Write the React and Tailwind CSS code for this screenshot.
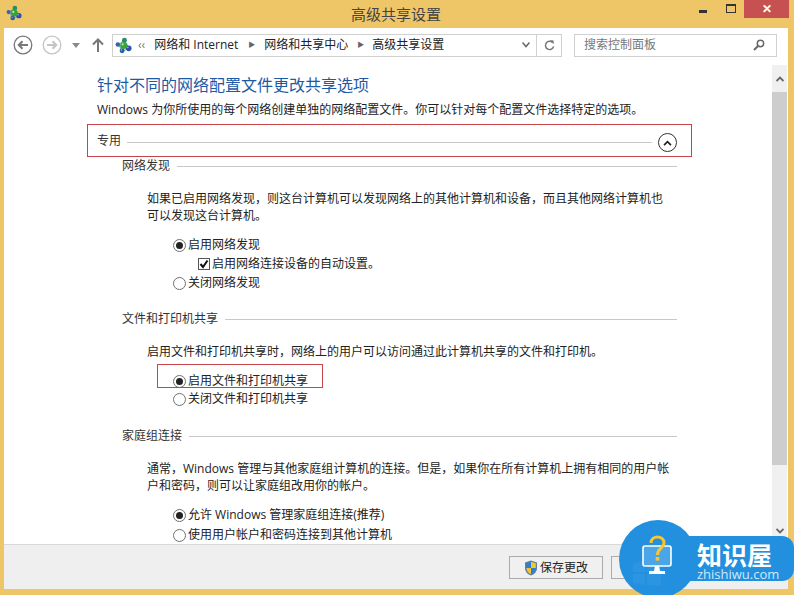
const fontStack = "font-['Open_Sans','Noto_Sans_CJK_SC',sans-serif]";

function NetworkIcon({ className }) {
    return (
        <svg viewBox="0 0 18 18" className={className}>
            <path d="M3.5 8 L10 3.5 L15 12 L8 15 Z" stroke="#7a93ad" strokeWidth="1" fill="none" />
            <circle cx="10" cy="3.5" r="2.6" fill="#2a8a6a" />
            <circle cx="3" cy="8" r="2.4" fill="#3a62b0" />
            <circle cx="14.5" cy="12" r="3" fill="#2a4fb0" />
            <circle cx="7.5" cy="14.5" r="2.6" fill="#2b5ca8" />
            <circle cx="9.2" cy="9" r="3.8" fill="#35a53a" />
            <circle cx="8.2" cy="7.8" r="1.2" fill="#b9e8b0" />
            <circle cx="13.6" cy="11" r="0.8" fill="#9fc0f0" />
            <circle cx="6.8" cy="13.8" r="0.7" fill="#9fc0f0" />
        </svg>
    );
}

function Radio({ checked }) {
    return (
        <span className="w-[13px] h-[13px] rounded-full border border-[#6f6f6f] bg-white flex items-center justify-center shrink-0">
            {checked && <span className="w-[7px] h-[7px] rounded-full bg-[#222]"></span>}
        </span>
    );
}

function RadioRow({ checked, children, className = "" }) {
    return (
        <div className={`flex items-center gap-[2px] h-[18px] pl-[169px] text-xs text-[#222] ${className}`}>
            <Radio checked={checked} />
            <span>{children}</span>
        </div>
    );
}

function SectionTitle({ children, className = "" }) {
    return (
        <div className={`flex items-center gap-[7px] h-[18px] pl-[118px] pr-[95px] text-xs text-[#333] ${className}`}>
            <span className="shrink-0">{children}</span>
            <span className="h-px flex-1 bg-[#c8c8c8]"></span>
        </div>
    );
}

function Para({ children, className = "" }) {
    return <p className={`pl-[143px] pr-[98px] text-xs leading-[17px] text-[#222] ${className}`}>{children}</p>;
}

function Shield() {
    return (
        <svg viewBox="0 0 14 16" className="w-[14px] h-[16px]">
            <path d="M7 0.5 L13 2.5 V8 C13 12 10 14.5 7 15.5 C4 14.5 1 12 1 8 V2.5 Z" fill="#5f7f9f" />
            <path d="M7 1.8 V8 H2.2 V3.3 Z" fill="#2f7fd0" />
            <path d="M7 1.8 L11.8 3.3 V8 H7 Z" fill="#f2c62f" />
            <path d="M7 8 V14.2 C4.5 13.3 2.6 11 2.3 8 Z" fill="#f2c62f" />
            <path d="M7 8 H11.7 C11.4 11 9.5 13.3 7 14.2 Z" fill="#2f7fd0" />
        </svg>
    );
}

function NavBar() {
    return (
        <div className="flex items-center h-[37px] pb-[3px] shrink-0">
            <svg viewBox="0 0 20 20" className="w-5 h-5 ml-[9px]">
                <circle cx="10" cy="10" r="8.8" fill="none" stroke="#777" strokeWidth="1.3" />
                <path d="M15 10 H6 M9.5 6.2 L5.7 10 L9.5 13.8" fill="none" stroke="#777" strokeWidth="2" />
            </svg>
            <svg viewBox="0 0 20 20" className="w-5 h-5 ml-[9px]">
                <circle cx="10" cy="10" r="8.8" fill="none" stroke="#c4c4c4" strokeWidth="1.3" />
                <path d="M5 10 H14 M10.5 6.2 L14.3 10 L10.5 13.8" fill="none" stroke="#c4c4c4" strokeWidth="2" />
            </svg>
            <svg viewBox="0 0 8 5" className="w-2 h-[5px] ml-[10px]">
                <path d="M0 0 H8 L4 5 Z" fill="#8a8a8a" />
            </svg>
            <svg viewBox="0 0 12 14" className="w-3 h-[14px] ml-[12px]">
                <path d="M6 14 V2 M1 6.5 L6 1.5 L11 6.5" fill="none" stroke="#777" strokeWidth="2" />
            </svg>
            <div className="flex items-center w-[450px] h-[23px] ml-[8px] border border-[#d0d0d0] text-xs text-[#222]">
                <NetworkIcon className="w-[17px] h-[17px] ml-[2px]" />
                <span className="ml-[6px] text-[#777]">‹‹</span>
                <span className="ml-[9px]">网络和 Internet</span>
                <span className="ml-[10px] mr-[9px] text-[7px] text-[#666]">▶</span>
                <span>网络和共享中心</span>
                <span className="ml-[9px] mr-[8px] text-[7px] text-[#666]">▶</span>
                <span>高级共享设置</span>
                <svg viewBox="0 0 8 6" className="w-2 h-[6px] ml-auto mr-[6px]">
                    <path d="M0.5 0.5 L4 4.5 L7.5 0.5" fill="none" stroke="#666" strokeWidth="1.5" />
                </svg>
                <div className="flex items-center justify-center w-[25px] h-full border-l border-[#d0d0d0]">
                    <svg viewBox="0 0 12 12" className="w-[11px] h-[11px]">
                        <path d="M9.5 3 A4.5 4.5 0 1 0 10.5 7" fill="none" stroke="#777" strokeWidth="1.6" />
                        <path d="M6.5 0 L10.5 0.5 V4.5 Z" fill="#777" />
                    </svg>
                </div>
            </div>
            <div className="flex items-center justify-between w-[203px] h-[23px] ml-[12px] pl-[9px] pr-[11px] border border-[#d0d0d0] text-xs text-[#777]">
                <span>搜索控制面板</span>
                <svg viewBox="0 0 12 12" className="w-3 h-3">
                    <circle cx="7.5" cy="4.5" r="3.2" fill="none" stroke="#666" strokeWidth="1.5" />
                    <path d="M5 7 L1 11" stroke="#666" strokeWidth="2" />
                </svg>
            </div>
        </div>
    );
}

function Logo() {
    return (
        <div className="absolute left-[619px] top-[520px] w-[175px] h-[75px]">
            <div className="absolute left-[50px] top-[16px] w-[125px] h-[45px] rounded-r-[12px] bg-[#2290de]"></div>
            <div className="absolute left-0 top-0 w-[78px] h-[78px] rounded-full bg-[#2290de]"></div>
            {/* faint windows mark under the badge */}
            <svg viewBox="0 0 28 26" className="absolute left-[14px] top-[40px] w-[28px] h-[26px]">
                <path d="M0 3 L12 1 V12 H0 Z M14 1 L28 0 V12 H14 Z M0 14 H12 V25 L0 23 Z M14 14 H28 V26 L14 25 Z" fill="#2b95e1" />
            </svg>
            <svg viewBox="0 0 30 40" className="absolute left-[23px] top-[15px] w-[30px] h-[40px]">
                <rect x="1" y="11" width="28" height="20" rx="2" fill="#4aa6e8" stroke="#ffffff" strokeWidth="1.6" />
                <path d="M13 31 H17 L18 36 H23 V39 H7 V36 H12 Z" fill="#ffffff" />
                <path d="M9 8 C9 0 22 0 22 8 C22 13 15.5 13 15.5 20" fill="none" stroke="#f7c531" strokeWidth="3" />
                <rect x="13.7" y="22" width="3.6" height="3.6" fill="#f7c531" />
            </svg>
            <div className="absolute left-[78px] top-[20px] text-[25px] leading-[30px] font-bold text-white whitespace-nowrap">知识屋</div>
            <div className="absolute left-[78px] top-[48px] text-[13px] leading-[12px] text-[#cfe8fa] whitespace-nowrap font-['Open_Sans',sans-serif]">zhishiwu.com</div>
        </div>
    );
}

export default function App() {
    return (
        <div className={`relative w-[794px] h-[595px] overflow-hidden flex flex-col bg-[#efc667] ${fontStack}`}>
            {/* title bar */}
            <div className="relative flex items-center h-[28px] shrink-0">
                <NetworkIcon className="w-4 h-4 ml-[6px] -mt-[3px]" />
                <div className="flex-1 text-center text-[15px] text-[#444] pl-[71px]">高级共享设置</div>
                <div className="flex self-start">
                    <div className="w-[8px] h-[3px] mt-[10px] bg-[#333] mr-[19px]"></div>
                    <div className="w-[10px] h-[9px] mt-[4px] border border-[#333] border-t-2 mr-[8px]"></div>
                    <div className="flex items-center justify-center w-[45px] h-[18px] bg-[#c75050] text-white text-xs font-bold mr-[5px]">✕</div>
                </div>
            </div>

            <div className="flex flex-col flex-1 mx-[4px] mr-[6px] mb-[6px] bg-white min-h-0">
                <NavBar />
                <div className="flex flex-1 min-h-0">
                    <div className="flex-1 pt-[10px]">
                        <h1 className="pl-[93px] text-base leading-[20px] text-[#1d5aa5]">针对不同的网络配置文件更改共享选项</h1>
                        <p className="pl-[93px] mt-[6px] text-xs leading-[18px] text-[#222]">Windows 为你所使用的每个网络创建单独的网络配置文件。你可以针对每个配置文件选择特定的选项。</p>
                        <div className="flex items-center gap-[6px] h-[33px] mt-[6px] pl-[93px] pr-[95px] text-xs text-[#333]">
                            <span className="-mt-[2px]">专用</span>
                            <span className="h-px flex-1 mt-[2px] bg-[#c8c8c8]"></span>
                            <span className="flex items-center justify-center w-[19px] h-[19px] rounded-full border border-[#333] mt-[2px]">
                                <svg viewBox="0 0 10 7" className="w-[9px] h-[6px]">
                                    <path d="M1 6 L5 2 L9 6" fill="none" stroke="#222" strokeWidth="2" />
                                </svg>
                            </span>
                        </div>
                        <SectionTitle className="-mt-[1px]">网络发现</SectionTitle>
                        <Para className="mt-[15px]">如果已启用网络发现，则这台计算机可以发现网络上的其他计算机和设备，而且其他网络计算机也可以发现这台计算机。</Para>
                        <RadioRow checked className="mt-[12px]">启用网络发现</RadioRow>
                        <div className="flex items-center gap-[2px] h-[20px] pl-[194px] text-xs text-[#222]">
                            <span className="flex items-center justify-center w-[12px] h-[12px] border border-[#555] bg-white">
                                <svg viewBox="0 0 10 10" className="w-[10px] h-[10px]">
                                    <path d="M1.5 5 L4 8 L8.5 1.5" fill="none" stroke="#111" strokeWidth="2" />
                                </svg>
                            </span>
                            <span>启用网络连接设备的自动设置。</span>
                        </div>
                        <RadioRow>关闭网络发现</RadioRow>
                        <SectionTitle className="mt-[18px]">文件和打印机共享</SectionTitle>
                        <Para className="mt-[15px]">启用文件和打印机共享时，网络上的用户可以访问通过此计算机共享的文件和打印机。</Para>
                        <RadioRow checked className="mt-[12px]">启用文件和打印机共享</RadioRow>
                        <RadioRow>关闭文件和打印机共享</RadioRow>
                        <SectionTitle className="mt-[19px]">家庭组连接</SectionTitle>
                        <Para className="mt-[15px]">通常，Windows 管理与其他家庭组计算机的连接。但是，如果你在所有计算机上拥有相同的用户帐<br />户和密码，则可以让家庭组改用你的帐户。</Para>
                        <RadioRow checked className="mt-[12px]">允许 Windows 管理家庭组连接(推荐)</RadioRow>
                        <RadioRow className="mt-[2px]">使用用户帐户和密码连接到其他计算机</RadioRow>
                    </div>
                    {/* scrollbar */}
                    <div className="flex flex-col w-[15px] mr-px bg-[#f0f0f0] shrink-0">
                        <div className="flex items-center justify-center h-[27px] shrink-0">
                            <svg viewBox="0 0 8 6" className="w-2 h-[6px]">
                                <path d="M0.5 5 L4 1.5 L7.5 5" fill="none" stroke="#666" strokeWidth="1.8" />
                            </svg>
                        </div>
                        <div className="h-[373px] bg-[#cdcdcd]"></div>
                        <div className="flex items-center justify-center h-[27px] mt-auto shrink-0">
                            <svg viewBox="0 0 8 6" className="w-2 h-[6px]">
                                <path d="M0.5 1 L4 4.5 L7.5 1" fill="none" stroke="#666" strokeWidth="1.8" />
                            </svg>
                        </div>
                    </div>
                </div>
                <div className="flex items-center gap-2 h-[45px] pl-[505px] pt-px border-t border-[#d9d9d9] bg-[#efefef] shrink-0">
                    <button className="flex items-center justify-center gap-[2px] w-[94px] h-[23px] border border-[#acacac] bg-[#f0f0f0] text-xs text-[#222]">
                        <Shield />
                        <span>保存更改</span>
                    </button>
                    <button className="w-[94px] h-[23px] border border-[#acacac] bg-[#f0f0f0]"></button>
                </div>
            </div>

            {/* red annotation boxes */}
            <div className="absolute left-[87px] top-[124px] w-[605px] h-[33px] border border-[#c8424a]"></div>
            <div className="absolute left-[157px] top-[364px] w-[166px] h-[24px] border border-[#c8424a]"></div>
            <Logo />
        </div>
    );
}
